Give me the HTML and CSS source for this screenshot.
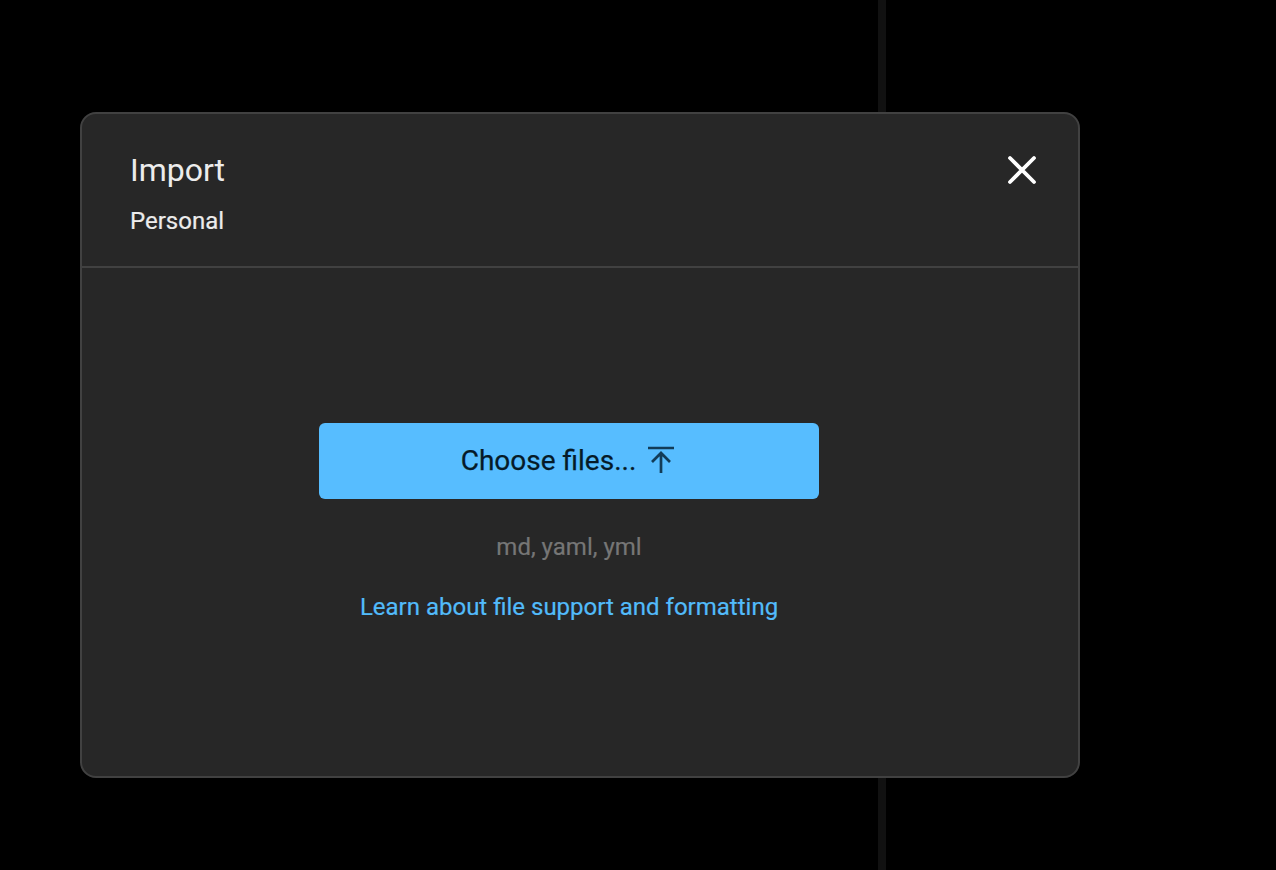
FILE: index.html
```html
<!DOCTYPE html>
<html lang="en">
<head>
<meta charset="utf-8">
<title>Import</title>
<link rel="stylesheet" href="styles.css">
</head>
<body>
<div class="backdrop-line"></div>
<div class="modal">
  <header class="modal-header">
    <div class="heading">
      <h1 class="title">Import</h1>
      <p class="subtitle">Personal</p>
    </div>
    <button class="close" aria-label="Close">
      <svg class="close-icon" viewBox="0 0 30 30" width="30" height="30" aria-hidden="true">
        <path d="M3 3 L27 27 M27 3 L3 27" />
      </svg>
    </button>
  </header>
  <div class="modal-body">
    <button class="choose">
      <span>Choose files...</span>
      <svg class="upload-icon" viewBox="0 0 28 28" width="28" height="28" aria-hidden="true">
        <path d="M1 2 H27 M14 27 V8 M5 16 L14 7 L23 16" />
      </svg>
    </button>
    <p class="formats">md, yaml, yml</p>
    <a class="learn" href="#">Learn about file support and formatting</a>
  </div>
</div>
</body>
</html>
```
FILE: styles.css
```css
* { box-sizing: border-box; }
html, body { height: 100%; }
body {
  margin: 0;
  background: #000;
  font-family: Roboto, "Liberation Sans", sans-serif;
  padding: 112px 0 0 80px;
  overflow: hidden;
}
.backdrop-line {
  position: absolute;
  left: 878px;
  top: 0;
  width: 8px;
  height: 870px;
  background: #111;
}
.modal {
  position: relative;
  width: 1000px;
  height: 666px;
  background: #272727;
  border: 2px solid #414141;
  border-radius: 16px;
}
.modal-header {
  display: flex;
  justify-content: space-between;
  align-items: flex-start;
  height: 154px;
  padding: 37px 41px 0 48px;
  border-bottom: 2px solid #414141;
}
.title {
  margin: 0;
  font-size: 32px;
  line-height: 38px;
  font-weight: 400;
  color: #ececec;
}
.subtitle {
  margin: 18px 0 0;
  font-size: 24px;
  line-height: 28px;
  color: #ececec;
  -webkit-text-stroke: 0.2px #ececec;
}
.close {
  padding: 0;
  margin-top: 4px;
  background: none;
  border: 0;
  line-height: 0;
}
.close-icon path {
  fill: none;
  stroke: #fff;
  stroke-width: 3.8;
  stroke-linecap: round;
}
.modal-body {
  display: flex;
  flex-direction: column;
  align-items: center;
  padding: 155px 22px 0 0;
}
.choose {
  display: flex;
  align-items: center;
  justify-content: center;
  gap: 11px;
  width: 500px;
  height: 76px;
  padding: 0 2px 2px 0;
  background: #57bdff;
  border: 0;
  border-radius: 6px;
  font: 400 28px Roboto, sans-serif;
  color: #051a28;
  -webkit-text-stroke: 0.25px #051a28;
}
.upload-icon path {
  fill: none;
  stroke: #123c58;
  stroke-width: 2.7;
}
.formats {
  margin: 33px 0 0;
  font-size: 24px;
  line-height: 30px;
  color: #767676;
  -webkit-text-stroke: 0.2px #767676;
}
.learn {
  margin-top: 30px;
  font-size: 24px;
  line-height: 30px;
  color: #52bbfa;
  text-decoration: none;
  -webkit-text-stroke: 0.2px #52bbfa;
}
```
